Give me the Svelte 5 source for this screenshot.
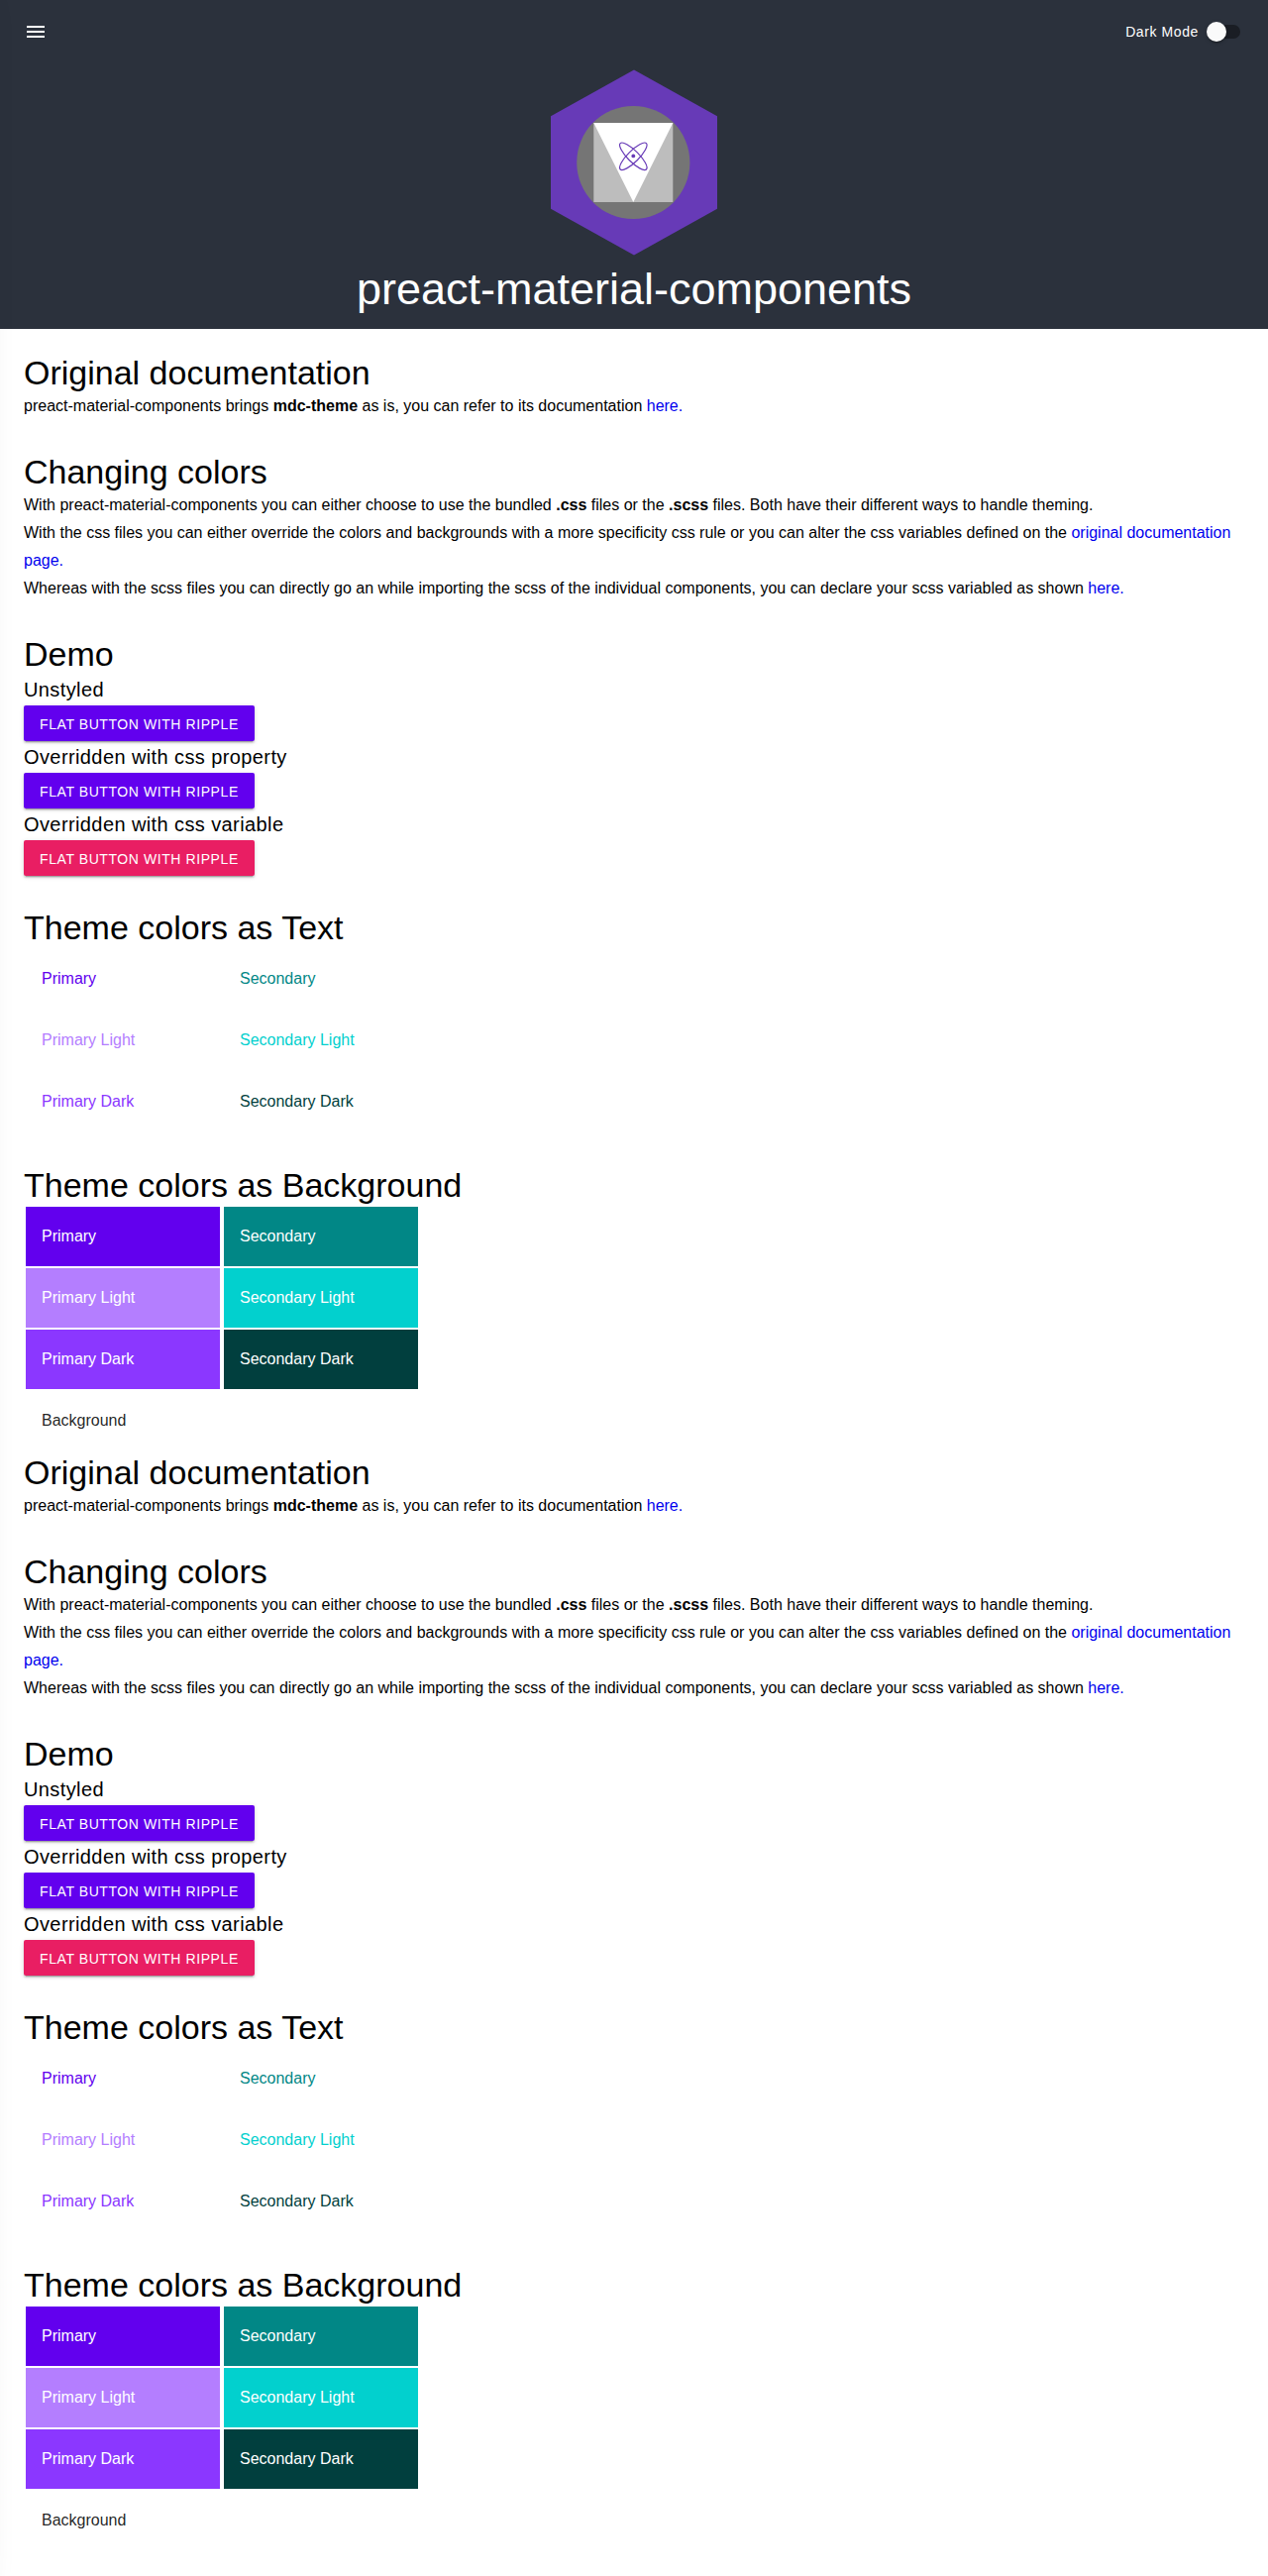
<script>
  const copies = [0, 1];
  const swatches = [
    ['primary', 'Primary'],
    ['secondary', 'Secondary'],
    ['primary-light', 'Primary Light'],
    ['secondary-light', 'Secondary Light'],
    ['primary-dark', 'Primary Dark'],
    ['secondary-dark', 'Secondary Dark'],
  ];
  const demos = [
    ['Unstyled', ''],
    ['Overridden with css property', ''],
    ['Overridden with css variable', 'pink'],
  ];
</script>

<aside class="drawer"></aside>

<header>
  <div class="bar">
    <svg class="menu" viewBox="0 0 24 24"><path d="M3 18h18v-2H3v2zm0-5h18v-2H3v2zm0-7v2h18V6H3z" /></svg>
    <div class="mode">
      <span>Dark Mode</span>
      <div class="switch"><div class="knob"></div></div>
    </div>
  </div>
  <svg class="logo" viewBox="0 0 168 188">
    <polygon points="84,0.5 168,47.3 168,140.7 84,187.5 0,140.7 0,47.3" fill="#673ab7" />
    <circle cx="83.3" cy="94" r="57.1" fill="#757575" />
    <rect x="43.3" y="54" width="80" height="80" fill="#bdbdbd" />
    <polygon points="43.3,54 123.3,54 83.3,134" fill="#fff" />
    <g fill="none" stroke="#673ab7" stroke-width="1.2">
      <ellipse cx="83.3" cy="87.8" rx="18.6" ry="5.6" transform="rotate(45 83.3 87.8)" />
      <ellipse cx="83.3" cy="87.8" rx="18.6" ry="5.6" transform="rotate(-45 83.3 87.8)" />
    </g>
    <circle cx="83.3" cy="87.4" r="1.9" fill="#673ab7" />
  </svg>
  <h1>preact-material-components</h1>
</header>

<main>
  {#each copies as copy (copy)}
    <article>
      <section>
        <h2>Original documentation</h2>
        <p>
          preact-material-components brings <strong>mdc-theme</strong> as is, you can refer to its documentation
          <a href="#docs">here.</a>
        </p>
      </section>
      <section>
        <h2>Changing colors</h2>
        <p>
          With preact-material-components you can either choose to use the bundled <strong>.css</strong> files or the
          <strong>.scss</strong> files. Both have their different ways to handle theming.
        </p>
        <p>
          With the css files you can either override the colors and backgrounds with a more specificity css rule or you
          can alter the css variables defined on the <a href="#docs">original documentation page.</a>
        </p>
        <p>
          Whereas with the scss files you can directly go an while importing the scss of the individual components, you
          can declare your scss variabled as shown <a href="#scss">here.</a>
        </p>
      </section>
      <section>
        <h2>Demo</h2>
        {#each demos as [label, tone]}
          <h3>{label}</h3>
          <button class={tone}>Flat button with ripple</button>
        {/each}
      </section>
      <section>
        <h2>Theme colors as Text</h2>
        <div class="grid">
          {#each swatches as [tone, label]}
            <div class="cell text {tone}">{label}</div>
          {/each}
        </div>
      </section>
      <section>
        <h2>Theme colors as Background</h2>
        <div class="grid">
          {#each swatches as [tone, label]}
            <div class="cell fill {tone}">{label}</div>
          {/each}
          <div class="cell background">Background</div>
        </div>
      </section>
    </article>
  {/each}
</main>

<style>
  :global(body) {
    margin: 0;
    background: #fff;
    font-family: 'Liberation Sans', Arial, sans-serif;
    -webkit-font-smoothing: antialiased;
    overflow-x: hidden;
  }
  /* Closed navigation drawer, parked just outside the left edge */
  .drawer {
    position: fixed;
    top: 0;
    left: 0;
    width: 240px;
    height: 100%;
    background: #fff;
    transform: translateX(-109%);
    box-shadow:
      0 8px 10px -5px rgba(0, 0, 0, 0.2),
      0 16px 24px 2px rgba(0, 0, 0, 0.14),
      0 6px 30px 5px rgba(0, 0, 0, 0.12);
  }
  header {
    display: flex;
    flex-direction: column;
    align-items: center;
    height: 332px;
    background: #2b313c;
    color: #fff;
  }
  .bar {
    display: flex;
    align-items: center;
    justify-content: space-between;
    box-sizing: border-box;
    width: 100%;
    height: 64px;
    padding: 0 28px 0 24px;
  }
  .menu {
    width: 24px;
    height: 24px;
    fill: #fff;
  }
  .mode {
    display: flex;
    align-items: center;
    gap: 10px;
    font-size: 14px;
    line-height: 20px;
    letter-spacing: 0.6px;
  }
  .switch {
    display: flex;
    align-items: center;
    width: 32px;
    height: 14px;
    border-radius: 7px;
    background: #1a1d24;
  }
  .knob {
    flex: none;
    width: 20px;
    height: 20px;
    margin-left: -2px;
    border-radius: 50%;
    background: #fafafa;
    box-shadow:
      0 3px 1px -2px rgba(0, 0, 0, 0.2),
      0 2px 2px 0 rgba(0, 0, 0, 0.14),
      0 1px 5px 0 rgba(0, 0, 0, 0.12);
  }
  .logo {
    width: 168px;
    height: 188px;
    margin-top: 6px;
  }
  h1 {
    margin: 10px 0 0;
    font-size: 45px;
    font-weight: 400;
    line-height: 48px;
  }
  main {
    padding: 24px;
  }
  section + section {
    margin-top: 32px;
  }
  h2 {
    margin: 0;
    font-size: 34px;
    font-weight: 400;
    line-height: 40px;
  }
  h3 {
    margin: 0;
    font-size: 20px;
    font-weight: 400;
    line-height: 32px;
    letter-spacing: 0.4px;
  }
  p {
    margin: 0;
    font-size: 16px;
    line-height: 28px;
  }
  a {
    color: #0000ee;
    text-decoration: none;
  }
  button {
    display: block;
    box-sizing: border-box;
    height: 36px;
    padding: 2px 16px 0;
    border: 0;
    border-radius: 2px;
    background: #6200ee;
    color: #fff;
    font-family: inherit;
    font-size: 14px;
    line-height: 34px;
    letter-spacing: 0.58px;
    text-transform: uppercase;
    box-shadow:
      0 3px 1px -2px rgba(0, 0, 0, 0.2),
      0 2px 2px 0 rgba(0, 0, 0, 0.14),
      0 1px 5px 0 rgba(0, 0, 0, 0.12);
  }
  button.pink {
    background: #e91e63;
  }
  .grid {
    display: grid;
    grid-template-columns: 196px 196px;
    gap: 2px 4px;
    padding: 2px;
  }
  .cell {
    --tone: #fff;
    height: 24px;
    padding: 18px 16px;
    font-size: 16px;
    line-height: 24px;
  }
  .primary {
    --tone: #6200ee;
  }
  .primary-light {
    --tone: #b47eff;
  }
  .primary-dark {
    --tone: #8b37ff;
  }
  .secondary {
    --tone: #018786;
  }
  .secondary-light {
    --tone: #02d0ce;
  }
  .secondary-dark {
    --tone: #013f3e;
  }
  .text {
    color: var(--tone);
  }
  .fill {
    background: var(--tone);
    color: #fff;
  }
  .background {
    color: rgba(0, 0, 0, 0.87);
  }
</style>
